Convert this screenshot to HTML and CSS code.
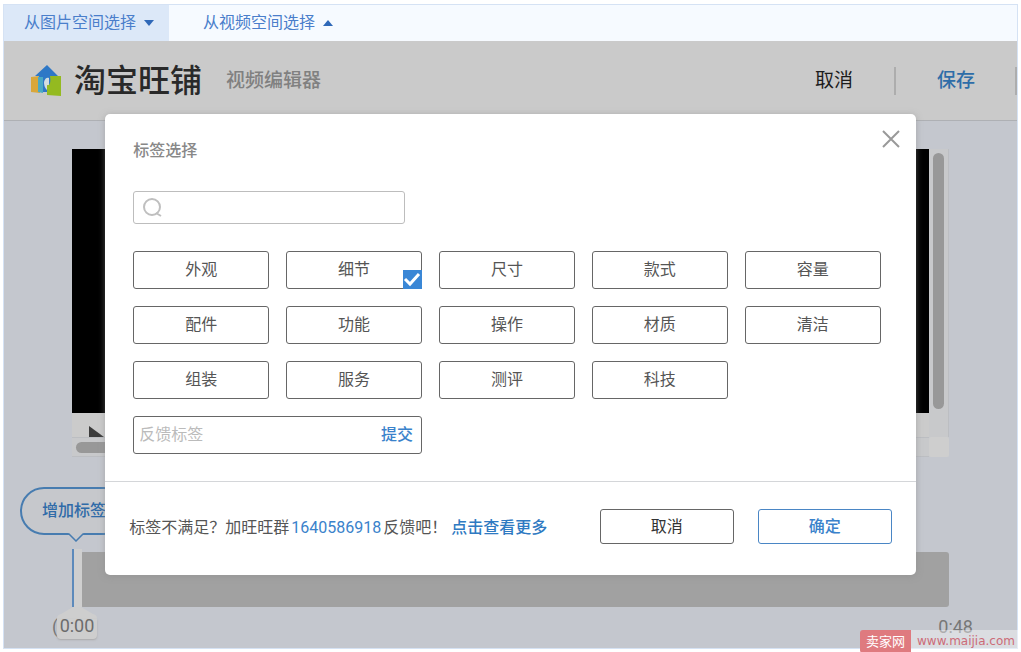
FILE: index.html
```
<!DOCTYPE html>
<html lang="zh-CN">
<head>
<meta charset="utf-8">
<meta name="viewport" content="width=device-width, initial-scale=1">
<title>视频编辑器</title>
<link rel="stylesheet" href="styles.css">
</head>
<body>
<div class="frame">
  <nav class="tabs">
    <button type="button" class="tab tab-active">从图片空间选择 <svg class="caret" viewBox="0 0 10 6"><path d="M0 0h10L5 6z"/></svg></button>
    <button type="button" class="tab">从视频空间选择 <svg class="caret" viewBox="0 0 10 6"><path d="M0 6h10L5 0z"/></svg></button>
  </nav>

  <header class="header">
    <svg class="logo" viewBox="0 0 32 34" aria-hidden="true">
      <path fill="#d9a73a" d="M1 13l9-1v17l-9-1z"/>
      <path fill="#2e78c6" d="M17 1L28 12H25V28H9V12H5z"/>
      <path fill="#4aa9c4" d="M8 13h5v16l-5-1z"/>
      <path fill="#d3dde0" d="M14 18c1-4 3-5 5-4v13c-3-1-5-4-5-9z"/>
      <path fill="#94ba20" d="M20 12h11v20l-14-1V21c3 1 4-3 3-9z"/>
    </svg>
    <span class="brand">淘宝旺铺</span>
    <h1 class="page-name">视频编辑器</h1>
    <div class="header-actions">
      <button type="button" class="head-btn">取消</button>
      <button type="button" class="head-btn head-save">保存</button>
    </div>
  </header>

  <main class="stage">
    <section class="player">
      <div class="screen"></div>
      <div class="scroll-y"><span class="thumb-y"></span></div>
      <div class="controls"><svg class="play" viewBox="0 0 16 11"><path d="M1 0l15 11H1z"/></svg></div>
      <div class="scroll-x"><span class="thumb-x"></span></div>
      <div class="corner"></div>
    </section>

    <section class="timeline">
      <button type="button" class="add-tag">增加标签
        <svg class="pointer" viewBox="0 0 16 9"><path fill="#c6c8cc" d="M0 0h16L8 8z"/><path d="M0 1h1l7 7 7-7h1" fill="none" stroke="#477cb0" stroke-width="1.500"/></svg>
      </button>
      <div class="track"></div>
      <div class="times"><span>(</span><span class="total">0:48</span></div>
      <div class="playhead">
        <span class="stem"></span>
        <svg class="badge-top" viewBox="0 0 40 12"><path d="M0 12C0 9 1 8 4 7L16 0h8l12 7c3 1 4 2 4 5z"/></svg>
        <span class="badge">0:00</span>
      </div>
    </section>
  </main>

  <div class="overlay">
    <section class="dialog" role="dialog" aria-labelledby="dialog-title">
      <div class="dialog-body">
        <h2 class="dialog-title" id="dialog-title">标签选择</h2>
        <button type="button" class="close" aria-label="关闭"><svg viewBox="0 0 18 18"><path d="M1 1l16 16M17 1L1 17"/></svg></button>
        <label class="search">
          <svg class="search-icon" viewBox="0 0 20 20"><circle cx="10" cy="9" r="8"/><path d="M14 15l5 3"/></svg>
          <input class="search-input" type="text" aria-label="搜索标签">
        </label>
        <div class="tags">
          <button type="button" class="tag">外观</button>
          <button type="button" class="tag" aria-pressed="true">细节<svg class="check" viewBox="0 0 19 19"><path fill="#3a87d6" d="M0 0h19v19H0z"/><path fill="none" stroke="#fff" stroke-width="3" d="M2 9l5 5 9-10"/></svg></button>
          <button type="button" class="tag">尺寸</button>
          <button type="button" class="tag">款式</button>
          <button type="button" class="tag">容量</button>
          <button type="button" class="tag">配件</button>
          <button type="button" class="tag">功能</button>
          <button type="button" class="tag">操作</button>
          <button type="button" class="tag">材质</button>
          <button type="button" class="tag">清洁</button>
          <button type="button" class="tag">组装</button>
          <button type="button" class="tag">服务</button>
          <button type="button" class="tag">测评</button>
          <button type="button" class="tag">科技</button>
          <form class="feedback">
            <input class="feedback-input" type="text" placeholder="反馈标签" aria-label="反馈标签">
            <button type="button" class="submit">提交</button>
          </form>
        </div>
      </div>
      <footer class="dialog-foot">
        <p class="hint">标签不满足？加旺旺群<span class="group-no">1640586918</span>反馈吧！<a class="more" href="#">点击查看更多</a></p>
        <button type="button" class="btn">取消</button>
        <button type="button" class="btn btn-primary">确定</button>
      </footer>
    </section>
  </div>
</div>
<div class="watermark"><span class="mark-name">卖家网</span><span class="mark-url">www.maijia.com</span></div>
</body>
</html>
```
FILE: styles.css
```
* { box-sizing: border-box; }
body {
  margin: 0;
  padding: 4px 3px;
  position: relative;
  min-height: 100vh;
  background: #fff;
  font: 16px/24px Roboto, "Noto Sans CJK SC", sans-serif;
  color: #555;
}
button, input { font: inherit; color: inherit; margin: 0; padding: 0; border: 0; background: none; }
button { cursor: pointer; }
h1, h2, p { margin: 0; }
svg { display: block; }

.frame { position: relative; border: 1px solid #d5e2f4; }

.tabs { display: flex; height: 36px; background: #f6faff; }
.tab { display: flex; align-items: center; gap: 8px; padding: 0 15px 0 20px; color: #4a7ecb; }
.tab + .tab { margin-left: 14px; }
.tab-active { background: #dce8f8; }
.caret { width: 10px; height: 6px; fill: #2f68b8; }

.header {
  display: flex;
  align-items: center;
  height: 80px;
  padding-left: 26px;
  background: #cacaca;
  border-bottom: 1px solid #aeb0b4;
}
.logo { width: 32px; height: 34px; }
.brand { margin-left: 12px; font-size: 32px; line-height: 40px; font-weight: 500; color: #292929; }
.page-name { margin-left: 24px; font-size: 19px; font-weight: 500; color: #808080; }
.header-actions { display: flex; margin-left: auto; }
.head-btn { height: 28px; padding: 0 41px; font-size: 19px; color: #1c1c1c; border-right: 2px solid #adadad; }
.head-save { padding-right: 40px; color: #2e6da8; font-weight: 500; }

.stage { height: 527px; padding: 28px 68px 0; background: #c4c7ce; }
.player { display: grid; grid-template-columns: 1fr 20px; grid-template-rows: 264px 24px 20px; }
.screen { background: #000; }
.scroll-y { grid-row: 1 / 3; grid-column: 2; display: flex; justify-content: center; padding: 4px 0; background: #c8c9cb; border-right: 1px solid #bcbec2; }
.thumb-y { width: 11px; height: 256px; border-radius: 6px; background: #989898; }
.controls { display: flex; align-items: center; padding: 12px 16px 0; background: #cbcbcb; }
.play { width: 16px; height: 11px; fill: #3c3c3c; }
.scroll-x { display: flex; align-items: center; padding: 0 4px; background: #c8c9cb; border-top: 1px solid #bcbec2; border-bottom: 1px solid #bcbec2; }
.thumb-x { width: 80%; height: 11px; border-radius: 6px; background: #989898; }
.corner { background: #cecece; border-radius: 2px; }

.timeline { position: relative; padding-top: 30px; }
.add-tag {
  position: relative;
  display: block;
  width: 108px;
  height: 48px;
  margin-left: -52px;
  border: 2px solid #477cb0;
  border-radius: 24px;
  background: #c6c8cc;
  color: #2f6ba8;
  font-weight: 500;
}
.pointer { position: absolute; left: 46px; top: 44px; width: 16px; height: 9px; }
.track { height: 55px; margin: 17px 0 0 8px; border-radius: 3px; background: #a1a1a1; }
.times { display: flex; justify-content: space-between; margin: 8px -24px 0 -20px; font-size: 18px; color: #777; }
.playhead { position: absolute; left: -15px; top: 92px; width: 40px; display: flex; flex-direction: column; align-items: center; }
.stem { width: 10px; height: 58px; border-left: 2px solid #5d8abb; background: #cfcfcf; }
.badge-top { width: 40px; height: 12px; fill: #cecece; }
.badge { width: 40px; height: 20px; line-height: 14px; border-radius: 0 0 4px 4px; background: #cecece; font-size: 18px; text-align: center; color: #6c6c6c; box-shadow: 0 1px 2px #aaa; }

.overlay { position: absolute; inset: 0; padding-top: 109px; display: flex; justify-content: center; align-items: flex-start; }
.dialog { width: 80%; background: #fff; border-radius: 5px; box-shadow: 0 1px 6px #8888; }
.dialog-body { position: relative; padding: 25px 35px 27px 28px; }
.dialog-title { font-size: 16px; font-weight: 500; color: #888; }
.close { position: absolute; top: 16px; right: 16px; width: 18px; height: 18px; }
.close svg { stroke: #999; stroke-width: 2; }
.search { display: flex; align-items: center; width: 272px; height: 33px; margin-top: 28px; padding: 0 8px; border: 1px solid #bdbdbd; border-radius: 3px; }
.search-icon { width: 20px; height: 20px; fill: none; stroke: #bfbfbf; stroke-width: 2; }
.search-input { flex: 1; min-width: 0; height: 100%; padding-left: 8px; outline: 0; }
.tags { display: grid; grid-template-columns: repeat(5, 1fr); grid-auto-rows: 38px; gap: 17px; margin-top: 27px; }
.tag, .feedback, .btn { border: 1px solid #666; border-radius: 3px; }
.tag { position: relative; }
.check { position: absolute; right: -1px; bottom: -1px; width: 19px; height: 19px; }
.feedback { grid-column: span 2; display: flex; padding: 0 8px 0 5px; }
.feedback-input { flex: 1; min-width: 0; outline: 0; }
.feedback-input::placeholder { color: #bbb; opacity: 1; }
.submit { color: #3a82cb; font-weight: 500; }
.dialog-foot { display: flex; align-items: flex-start; gap: 24px; height: 94px; padding: 27px 24px 0; border-top: 1px solid #d4d6d9; }
.hint { flex: 1; line-height: 38px; white-space: nowrap; }
.group-no { margin: 0 2px; color: #3a82cb; }
.more { margin-left: 4px; color: #2f7ac2; font-weight: 500; text-decoration: none; }
.btn { width: 134px; height: 35px; color: #333; }
.btn-primary { border-color: #4a86c5; color: #3a82cb; font-weight: 500; }

.watermark { position: absolute; right: 3px; bottom: 0; display: flex; height: 23px; line-height: 23px; }
.mark-name { padding: 0 6px; border-radius: 3px 0 0 3px; background: #df7a7f; color: #fff; font-size: 13px; }
.mark-url { padding: 0 3px 0 6px; background: #ffffff66; color: #cc6b78; font: 12px/23px "DejaVu Sans", Verdana, sans-serif; }
```
